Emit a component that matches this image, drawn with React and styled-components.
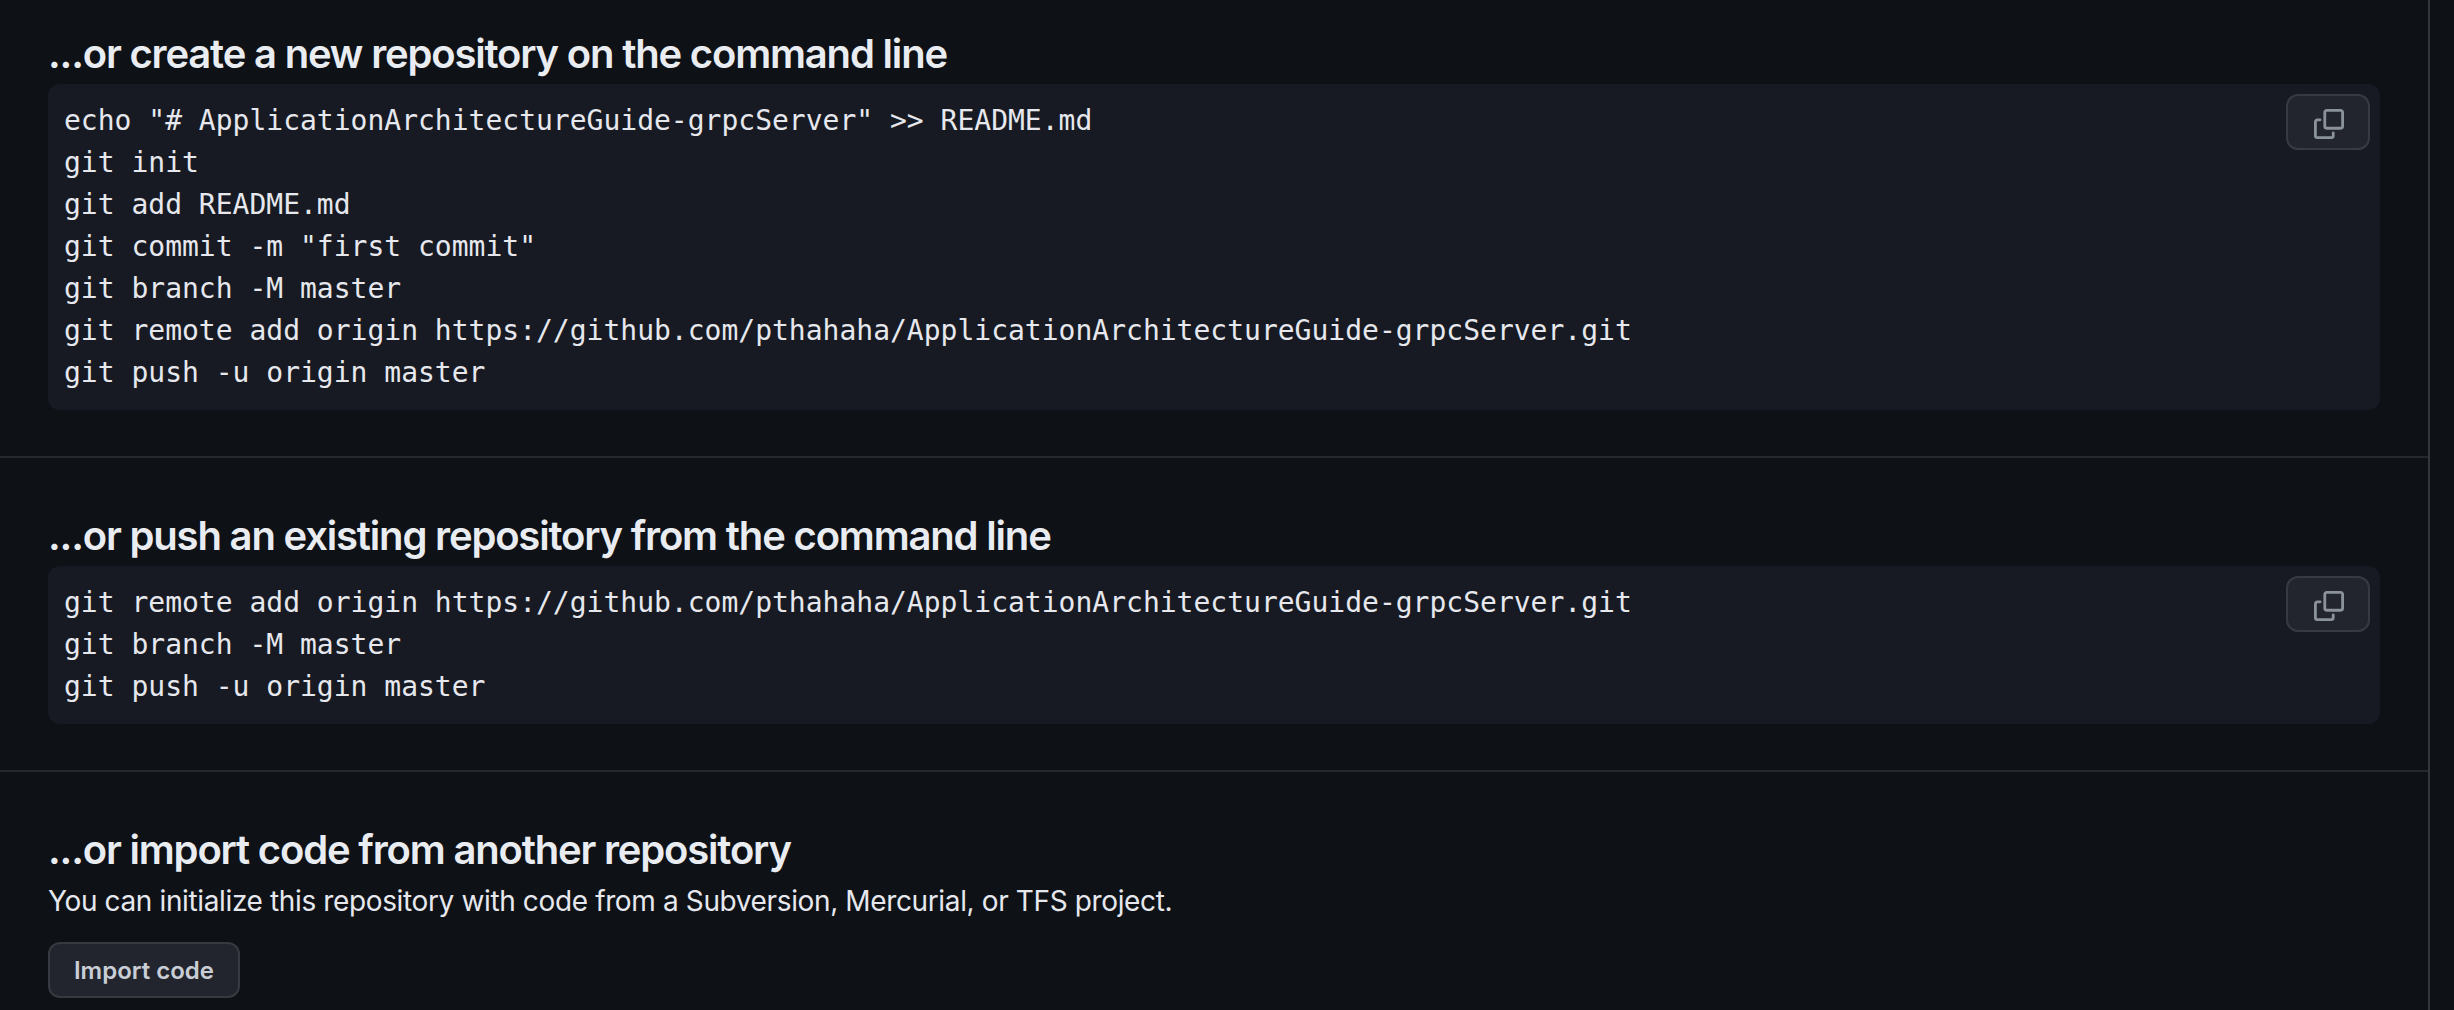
import React from "react";
import styled, { createGlobalStyle } from "styled-components";

const GlobalStyle = createGlobalStyle`
  html, body {
    margin: 0;
    padding: 0;
    background-color: #0e1116;
  }
`;

const Page = styled.div`
  width: 2430px;
  height: 1010px;
  overflow: hidden;
  box-sizing: border-box;
  border-right: 2px solid #33363c;
  font-family: "Inter", "Liberation Sans", sans-serif;
  color: #e9ecf1;
`;

const Section = styled.section`
  padding: ${(props) => (props.$first ? "24px" : "48px")} 48px 46px;
  border-bottom: ${(props) => (props.$last ? "none" : "2px solid #25282e")};
`;

const Heading = styled.h3`
  margin: 0;
  font-size: 40px;
  font-weight: 600;
  line-height: 60px;
  letter-spacing: -1.18px;
  color: #e9ecf1;
`;

const CodeBox = styled.div`
  position: relative;
  background-color: #171a22;
  border-radius: 12px;
  padding: 16px;
`;

const Code = styled.pre`
  margin: 0;
  font-family: "DejaVu Sans Mono", "Liberation Mono", monospace;
  font-size: 28px;
  line-height: 42px;
  color: #e6e8ee;
`;

const CopyButton = styled.button`
  position: absolute;
  top: 10px;
  right: 10px;
  width: 84px;
  height: 56px;
  display: flex;
  align-items: center;
  justify-content: center;
  padding: 4px 0 0 2px;
  background-color: #22252d;
  border: 2px solid #373a41;
  border-radius: 12px;
  color: #8b9299;
  svg {
    width: 30px;
    height: 30px;
    fill: currentColor;
  }
`;

const Text = styled.p`
  margin: 0 0 20px;
  font-size: 28px;
  line-height: 42px;
  letter-spacing: -0.37px;
  color: #e6e8ee;
`;

const ImportButton = styled.button`
  width: 192px;
  height: 56px;
  padding: 0;
  background-color: #22252d;
  border: 2px solid #373a41;
  border-radius: 12px;
  font-family: inherit;
  font-size: 24px;
  font-weight: 600;
  color: #c9ced6;
`;

const CopyIcon = () => (
  <svg viewBox="0 0 16 16" aria-hidden="true">
    <path d="M0 6.75C0 5.784.784 5 1.75 5h1.5a.75.75 0 0 1 0 1.5h-1.5a.25.25 0 0 0-.25.25v7.5c0 .138.112.25.25.25h7.5a.25.25 0 0 0 .25-.25v-1.5a.75.75 0 0 1 1.5 0v1.5A1.75 1.75 0 0 1 9.25 16h-7.5A1.75 1.75 0 0 1 0 14.25Z" />
    <path d="M5 1.75C5 .784 5.784 0 6.75 0h7.5C15.216 0 16 .784 16 1.75v7.5A1.75 1.75 0 0 1 14.25 11h-7.5A1.75 1.75 0 0 1 5 9.25Zm1.75-.25a.25.25 0 0 0-.25.25v7.5c0 .138.112.25.25.25h7.5a.25.25 0 0 0 .25-.25v-7.5a.25.25 0 0 0-.25-.25Z" />
  </svg>
);

const createCommands = `echo "# ApplicationArchitectureGuide-grpcServer" >> README.md
git init
git add README.md
git commit -m "first commit"
git branch -M master
git remote add origin https://github.com/pthahaha/ApplicationArchitectureGuide-grpcServer.git
git push -u origin master`;

const pushCommands = `git remote add origin https://github.com/pthahaha/ApplicationArchitectureGuide-grpcServer.git
git branch -M master
git push -u origin master`;

const CommandBlock = ({ commands }) => (
  <CodeBox>
    <Code>{commands}</Code>
    <CopyButton aria-label="Copy">
      <CopyIcon />
    </CopyButton>
  </CodeBox>
);

export default function App() {
  return (
    <Page>
      <GlobalStyle />
      <Section $first>
        <Heading>...or create a new repository on the command line</Heading>
        <CommandBlock commands={createCommands} />
      </Section>
      <Section>
        <Heading>...or push an existing repository from the command line</Heading>
        <CommandBlock commands={pushCommands} />
      </Section>
      <Section $last>
        <Heading>...or import code from another repository</Heading>
        <Text>
          You can initialize this repository with code from a Subversion,
          Mercurial, or TFS project.
        </Text>
        <ImportButton>Import code</ImportButton>
      </Section>
    </Page>
  );
}
